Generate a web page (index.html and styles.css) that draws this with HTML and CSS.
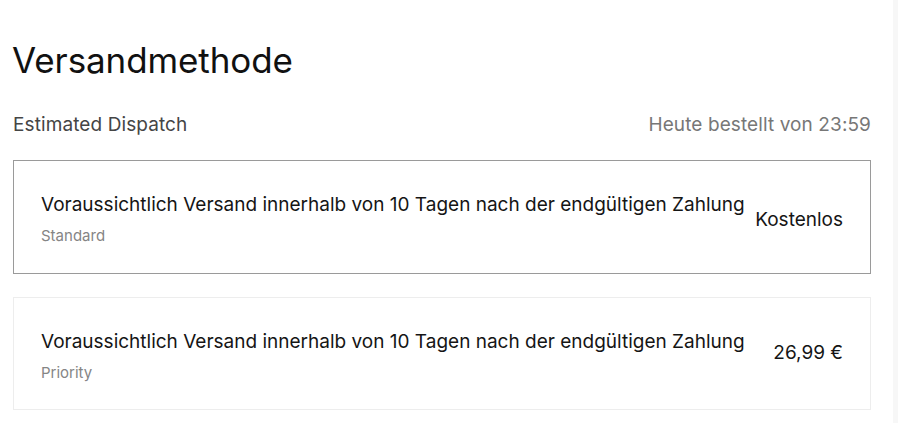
FILE: index.html
```html
<!DOCTYPE html>
<html lang="de">
<head>
<meta charset="utf-8">
<link rel="stylesheet" href="styles.css">
</head>
<body>
<div class="page">
  <main class="main">
    <h1 class="title">Versandmethode</h1>
    <div class="dispatch">
      <span class="dispatch-label">Estimated Dispatch</span>
      <span class="dispatch-time">Heute bestellt von 23:59</span>
    </div>
    <div class="option option-selected">
      <div class="option-text">
        <div class="option-desc">Voraussichtlich Versand innerhalb von 10 Tagen nach der endgültigen Zahlung</div>
        <div class="option-name">Standard</div>
      </div>
      <div class="option-price">Kostenlos</div>
    </div>
    <div class="option">
      <div class="option-text">
        <div class="option-desc">Voraussichtlich Versand innerhalb von 10 Tagen nach der endgültigen Zahlung</div>
        <div class="option-name">Priority</div>
      </div>
      <div class="option-price">26,99&nbsp;€</div>
    </div>
  </main>
  <aside class="side"></aside>
</div>
</body>
</html>
```
FILE: styles.css
```css
html, body {
  margin: 0;
  padding: 0;
  background: #fff;
}
body {
  font-family: Inter, "Noto Sans", sans-serif;
  color: #111;
}
.page {
  display: flex;
  height: 423px;
  overflow: hidden;
}
.main {
  width: 858px;
  padding: 0 22px 0 13px;
  flex: none;
}
.side {
  flex: 1;
  background: #f7f7f7;
}
.title {
  margin: 38px 0 0 -1px;
  font-size: 35px;
  font-weight: 400;
  line-height: 44px;
  letter-spacing: -0.1px;
  color: #111;
}
.dispatch {
  display: flex;
  justify-content: space-between;
  margin-top: 31px;
  font-size: 19px;
  line-height: 24px;
  letter-spacing: 0.1px;
}
.dispatch-label {
  color: #454545;
}
.dispatch-time {
  color: #777;
}
.option {
  display: flex;
  align-items: flex-start;
  justify-content: space-between;
  height: 113px;
  box-sizing: border-box;
  padding: 32px 27px 0 27px;
  border: 1px solid #ededed;
  margin-top: 23px;
}
.option-selected {
  border-color: #9a9a9a;
  margin-top: 23px;
  height: 114px;
}
.option-desc {
  font-size: 19px;
  line-height: 24px;
  color: #151515;
}
.option-name {
  margin-top: 10px;
  font-size: 15px;
  line-height: 18px;
  color: #858585;
}
.option-price {
  font-size: 19px;
  line-height: 24px;
  color: #151515;
  margin-top: 11px;
}
.option-selected .option-price {
  margin-top: 15px;
}
```
